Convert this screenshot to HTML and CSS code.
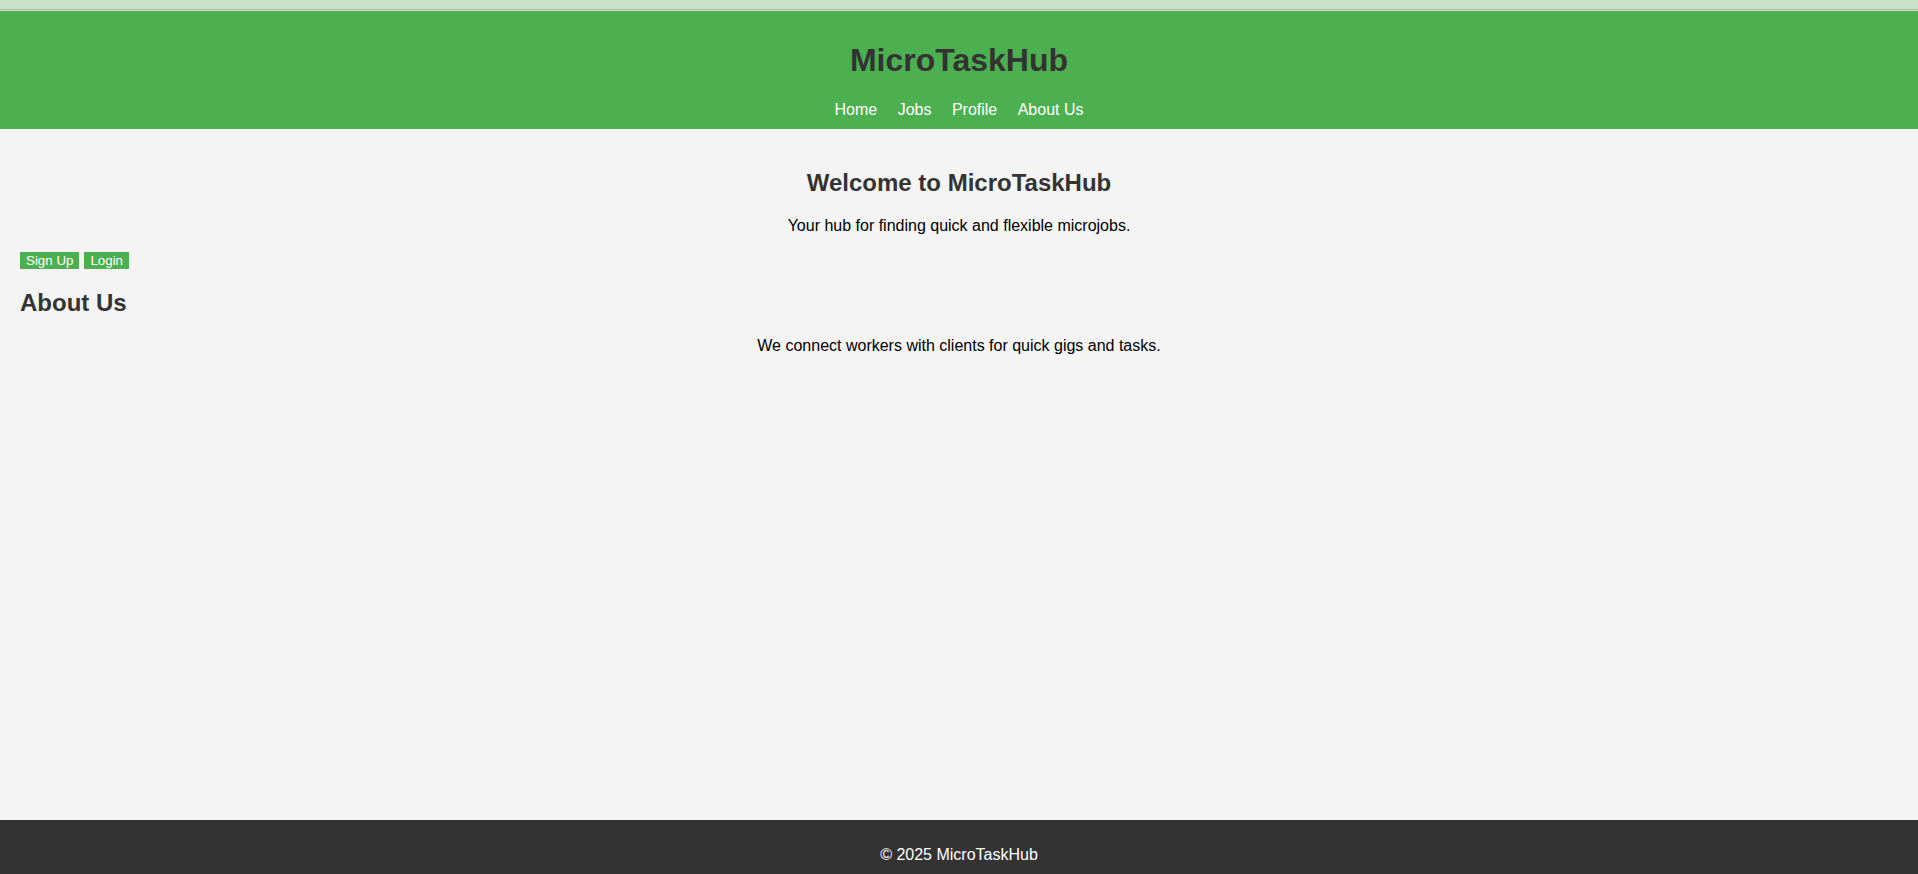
FILE: index.html
```html
<!DOCTYPE html>
<html lang="en">
<head>
<meta charset="utf-8">
<title>MicroTaskHub</title>
<link rel="stylesheet" href="styles.css">
</head>
<body>
<div class="topstrip"></div>
<header class="site-header">
  <h1 class="logo">MicroTaskHub</h1>
  <nav class="nav">
    <a href="#">Home</a>
    <a href="#">Jobs</a>
    <a href="#">Profile</a>
    <a href="#">About Us</a>
  </nav>
</header>
<main class="main">
  <section class="welcome">
    <h2>Welcome to MicroTaskHub</h2>
    <p>Your hub for finding quick and flexible microjobs.</p>
  </section>
  <div class="actions">
    <button class="btn">Sign Up</button>
    <button class="btn">Login</button>
  </div>
  <section class="about">
    <h2>About Us</h2>
    <p>We connect workers with clients for quick gigs and tasks.</p>
  </section>
</main>
<footer class="site-footer">
  <p>&copy; 2025 MicroTaskHub</p>
</footer>
</body>
</html>
```

FILE: styles.css
```css
html, body {
  margin: 0;
  padding: 0;
}
body {
  font-family: "Liberation Sans", Arial, sans-serif;
  background: #f4f4f4;
  color: #000;
}
.topstrip {
  height: 9px;
  background: #c6e2c7;
  border-bottom: 1px solid #a9bda9;
  box-shadow: 0 1px 0 #d3dcd3;
  margin-bottom: 1px;
}
.site-header {
  background: #4caf50;
  padding: 10px;
  text-align: center;
}
.logo {
  margin: 21px 0 22px;
  font-size: 32px;
  color: #333;
}
.nav a {
  color: #fff;
  text-decoration: none;
  font-size: 16px;
  margin: 0 8px;
}
.main {
  padding: 20px;
  min-height: 691px;
  box-sizing: border-box;
}
.welcome {
  text-align: center;
}
h2 {
  font-size: 24px;
  color: #333;
  margin: 20px 0;
}
.welcome p {
  margin: 16px 0;
}
.actions {
  display: flex;
  gap: 5px;
  margin-top: 17px;
}
.btn {
  background: #4caf50;
  color: #fff;
  border: none;
  padding: 1px 6px;
  font-family: "Liberation Sans", Arial, sans-serif;
  font-size: 13.33px;
  line-height: 15px;
}
.about h2 {
  text-align: left;
}
.about p {
  text-align: center;
  margin: 16px 0;
}
.site-footer {
  background: #333;
  color: #fff;
  text-align: center;
  padding: 10px;
}
.site-footer p {
  margin: 16px 0;
}
```
